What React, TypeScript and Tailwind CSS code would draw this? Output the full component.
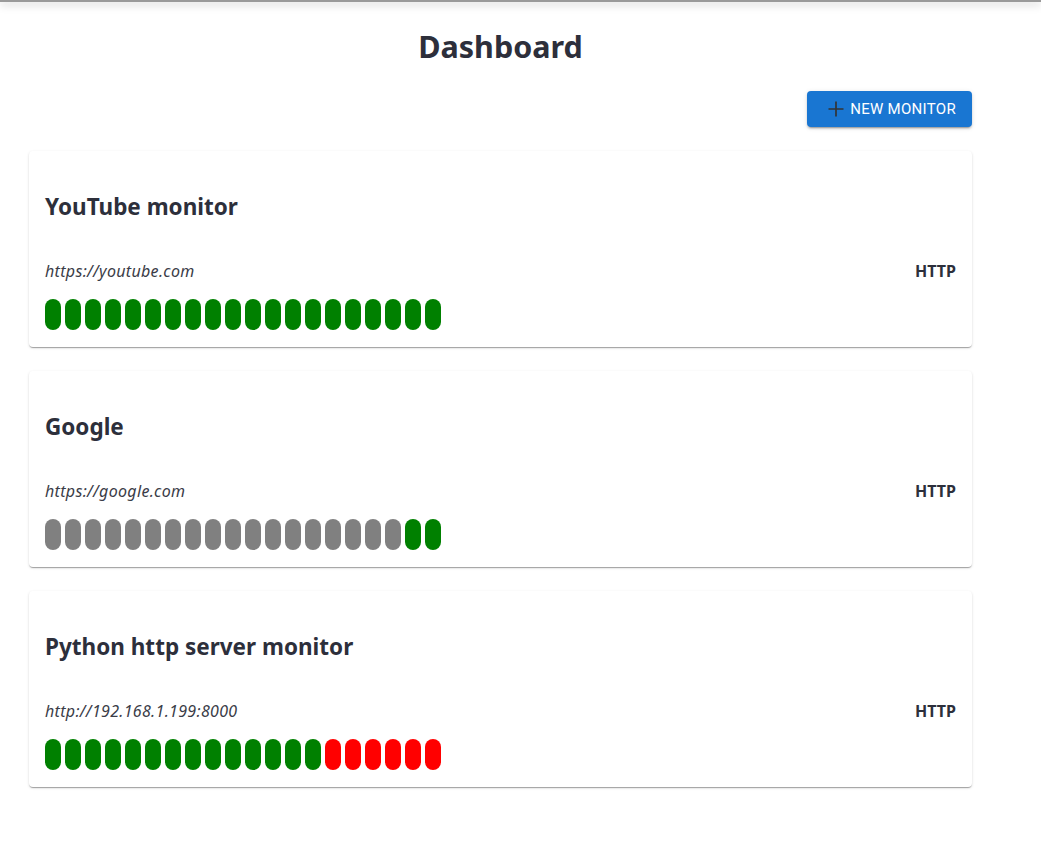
import React from "react";

type Status = "up" | "down" | "unknown";

type Monitor = {
  name: string;
  url: string;
  kind: string;
  beats: Status[];
};

const repeat = (s: Status, n: number): Status[] => Array.from({ length: n }, () => s);

const monitors: Monitor[] = [
  { name: "YouTube monitor", url: "https://youtube.com", kind: "HTTP", beats: repeat("up", 20) },
  { name: "Google", url: "https://google.com", kind: "HTTP", beats: [...repeat("unknown", 18), ...repeat("up", 2)] },
  { name: "Python http server monitor", url: "http://192.168.1.199:8000", kind: "HTTP", beats: [...repeat("up", 14), ...repeat("down", 6)] },
];

const beatColor: Record<Status, string> = {
  up: "bg-[#008000]",
  down: "bg-[#ff0000]",
  unknown: "bg-[#808080]",
};

const MonitorCard = ({ monitor }: { monitor: Monitor }) => (
  <div className="rounded-[4px] bg-white px-4 pt-[40px] pb-[17px] shadow-[0_2px_1px_-1px_rgba(0,0,0,0.2),0_1px_1px_0_rgba(0,0,0,0.14),0_1px_3px_0_rgba(0,0,0,0.12)]">
    <h2 className="text-[22.5px] leading-[32px] font-bold text-[#2d2f3b]">{monitor.name}</h2>
    <div className="mt-[38px] flex items-center justify-between">
      <p className="text-[16px] leading-5 italic tracking-[0.02em] text-[#3a3c47]">{monitor.url}</p>
      <span className="text-[16px] leading-5 font-bold text-[#2d2f3b]">{monitor.kind}</span>
    </div>
    <div className="mt-[18px] flex gap-1">
      {monitor.beats.map((b, i) => (
        <div key={i} className={`h-[31px] w-4 rounded-full ${beatColor[b]}`} />
      ))}
    </div>
  </div>
);

export default function App() {
  return (
    <div className="min-h-[861px] bg-white" style={{ fontFamily: '"Noto Sans", "Open Sans", sans-serif' }}>
      {/* app bar shadow */}
      <div className="h-[2px] bg-[#9a9a9a] shadow-[0_2px_8px_rgba(0,0,0,0.35)]" />

      <div className="w-[943px] ml-[29px]">
        <h1 className="pt-[26px] text-center text-[30.5px] leading-9 font-bold text-[#2d2f3b]">Dashboard</h1>

        <div className="mt-[27px] flex justify-end">
          <button
            className="flex h-9 items-center gap-[4px] rounded-[4px] bg-[#1976d2] pl-[19px] pr-[16px] text-[15px] tracking-[0.02em] text-white uppercase shadow-[0_3px_1px_-2px_rgba(0,0,0,0.2),0_2px_2px_0_rgba(0,0,0,0.14),0_1px_5px_0_rgba(0,0,0,0.12)]"
            style={{ fontFamily: "Roboto, sans-serif" }}
          >
            <svg width="20" height="20" viewBox="0 0 24 24" className="text-[#333]">
              <path d="M12 3v18M3 12h18" stroke="currentColor" strokeWidth="2" fill="none" />
            </svg>
            New Monitor
          </button>
        </div>

        <div className="mt-6 flex flex-col gap-6">
          {monitors.map((m) => (
            <MonitorCard key={m.name} monitor={m} />
          ))}
        </div>
      </div>
    </div>
  );
}
